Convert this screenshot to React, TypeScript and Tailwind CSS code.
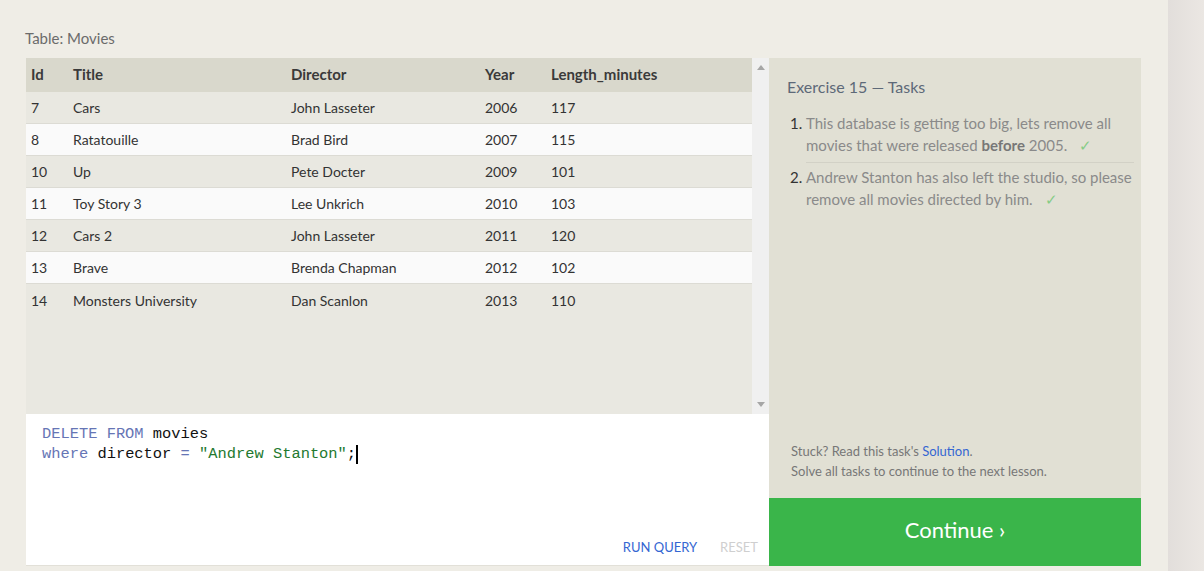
import React from 'react';

const movies = [
  { id: 7, title: 'Cars', director: 'John Lasseter', year: 2006, length: 117 },
  { id: 8, title: 'Ratatouille', director: 'Brad Bird', year: 2007, length: 115 },
  { id: 10, title: 'Up', director: 'Pete Docter', year: 2009, length: 101 },
  { id: 11, title: 'Toy Story 3', director: 'Lee Unkrich', year: 2010, length: 103 },
  { id: 12, title: 'Cars 2', director: 'John Lasseter', year: 2011, length: 120 },
  { id: 13, title: 'Brave', director: 'Brenda Chapman', year: 2012, length: 102 },
  { id: 14, title: 'Monsters University', director: 'Dan Scanlon', year: 2013, length: 110 },
];

const cols = 'grid grid-cols-[42px_218px_194px_66px_1fr]';

const Check = () => <span className="ml-[12px] text-[#86cc86]">✓</span>;

const App: React.FC = () => {
  return (
    <div className="w-[1204px] h-[571px] flex bg-[#efede6] font-['Lato',sans-serif] overflow-hidden">
      <div className="w-[1168px] pl-[25px] pt-[28px]">
        <div className="h-[20px] leading-[20px] text-[15px] text-[#6b6b6b] mb-[10px]">Table: Movies</div>

        <div className="flex w-[1116px] ml-[1px]">
          {/* left: table + editor */}
          <div className="w-[743px] flex flex-col">
            <div className="h-[356px] flex bg-[#e9e8e1]">
              <div className="flex-1 text-[14px] text-[#333]">
                <div className={`${cols} h-[34px] pb-[2px] items-center bg-[#d9d8cc] text-[15px] font-bold text-[#3a3a3a]`}>
                  <div className="px-[5px]">Id</div>
                  <div className="px-[5px]">Title</div>
                  <div className="px-[5px]">Director</div>
                  <div className="px-[5px]">Year</div>
                  <div className="px-[5px]">Length_minutes</div>
                </div>
                {movies.map((m, i) => (
                  <div
                    key={m.id}
                    className={`${cols} h-[32px] items-center border-b border-[#dcdbd4] ${i % 2 === 0 ? 'bg-[#e9e8e1]' : 'bg-[#fafafa]'} ${i === movies.length - 1 ? 'border-b-0' : ''}`}
                  >
                    <div className="px-[5px]">{m.id}</div>
                    <div className="px-[5px]">{m.title}</div>
                    <div className="px-[5px]">{m.director}</div>
                    <div className="px-[5px]">{m.year}</div>
                    <div className="px-[5px]">{m.length}</div>
                  </div>
                ))}
              </div>
              <div className="w-[17px] bg-[#f0f0f0] flex flex-col items-center justify-between py-[7px]">
                <svg width="8" height="5" viewBox="0 0 8 5"><path d="M4 0 L8 5 L0 5 Z" fill="#a6a6a6" /></svg>
                <svg width="8" height="5" viewBox="0 0 8 5"><path d="M0 0 L8 0 L4 5 Z" fill="#a6a6a6" /></svg>
              </div>
            </div>

            <div className="h-[152px] bg-white flex flex-col justify-between border-b border-[#e2e0d8]">
              <div className="pl-[16px] pt-[10px] font-['Liberation_Mono',monospace] text-[15.4px] leading-[20px] text-[#111]">
                <div>
                  <span className="text-[#6675b5]">DELETE FROM</span> movies
                </div>
                <div className="flex items-center">
                  <span className="text-[#6675b5]">where</span>
                  <span>&nbsp;director&nbsp;</span>
                  <span className="text-[#6675b5]">=</span>
                  <span>&nbsp;</span>
                  <span className="text-[#23792f]">"Andrew Stanton"</span>
                  <span>;</span>
                  <span className="inline-block w-[2px] h-[19px] bg-black" />
                </div>
              </div>
              <div className="flex justify-end gap-[23px] pr-[11px] pb-[9px] text-[13px] leading-[18px]">
                <span className="text-[#3466d2]">RUN QUERY</span>
                <span className="text-[#cfcfcf]">RESET</span>
              </div>
            </div>
          </div>

          {/* right: tasks */}
          <div className="w-[372px] flex flex-col">
            <div className="h-[440px] bg-[#e1e0d4] flex flex-col pl-[18px] pr-[7px] pt-[18px] pb-[17px]">
              <div className="text-[16px] leading-[22px] text-[#5d6978]">Exercise 15 — Tasks</div>
              <ol className="mt-[14px] text-[15px] leading-[22px] text-[#8a8a8a]">
                <li className="flex">
                  <span className="w-[19px] pl-[3px] text-[#333]">1.</span>
                  <div className="flex-1 border-b border-[#d2d1c6] pb-[6px] whitespace-nowrap">
                    This database is getting too big, lets remove all
                    <br />
                    movies that were released <b className="text-[#777]">before</b> 2005.
                    <Check />
                  </div>
                </li>
                <li className="flex pt-[3px]">
                  <span className="w-[19px] pl-[3px] text-[#333]">2.</span>
                  <div className="flex-1 whitespace-nowrap">
                    Andrew Stanton has also left the studio, so please
                    <br />
                    remove all movies directed by him.
                    <Check />
                  </div>
                </li>
              </ol>
              <div className="mt-auto pl-[4px] text-[13px] leading-[20px] text-[#777]">
                <div>
                  Stuck? Read this task's <span className="text-[#3466d2]">Solution</span>.
                </div>
                <div>Solve all tasks to continue to the next lesson.</div>
              </div>
            </div>
            <div className="h-[68px] bg-[#3ab54a] flex items-center justify-center pb-[6px] text-white text-[22px]">
              Continue ›
            </div>
          </div>
        </div>
      </div>
      <div className="flex-1 bg-gradient-to-r from-[#e2dedb] to-[#ebe7e3]" />
    </div>
  );
};

export default App;
